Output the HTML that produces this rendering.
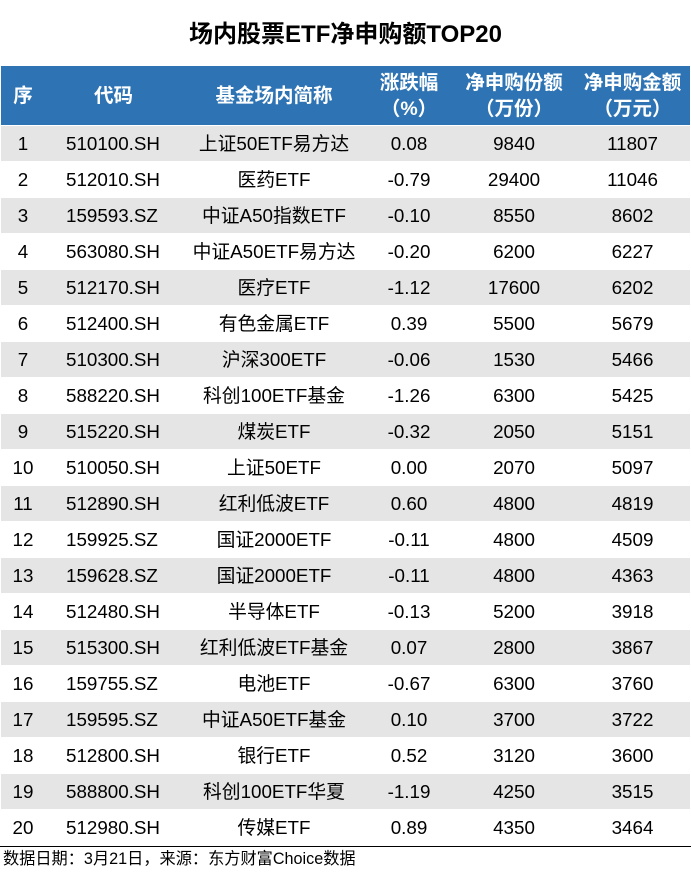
<!DOCTYPE html>
<html><head><meta charset="utf-8"><style>
body{margin:0;width:691px;height:881px;background:#fff;font-family:"Liberation Sans","Noto Sans CJK SC",sans-serif;color:#000;position:relative;overflow:hidden}
.t{position:absolute;top:19px;left:0;width:691px;text-align:center;font-size:24px;font-weight:bold;line-height:32px}
.h{position:absolute;top:66px;left:1px;width:689px;height:59px;background:#2e74b5;color:#fff;font-weight:bold;font-size:19.5px}
.h div{position:absolute;text-align:center;line-height:26px;white-space:nowrap}
.r{position:absolute;left:1px;width:689px;height:35px;font-size:18.8px;line-height:36px}
.r.g{background:#e5e5e5}
.r span{position:absolute;text-align:center;top:0;white-space:nowrap}
.c1{left:0;width:44px}.c2{left:65px;text-align:left!important}.c3{left:180px;width:186px}.c4{left:368px;width:80px}.c5{left:463px;width:100px}.c6{left:580px;width:103px}
.ln{position:absolute;left:0;top:846px;width:691px;height:1px;background:#000}
.f{position:absolute;left:3px;top:847px;font-size:16.2px;line-height:24px}
</style></head><body>
<div class="t">场内股票ETF净申购额TOP20</div>
<div class="h">
<div style="left:0;width:44px;top:17px">序</div>
<div style="left:65px;width:95px;top:17px">代码</div>
<div style="left:180px;width:186px;top:17px">基金场内简称</div>
<div style="left:368px;width:80px;top:4px">涨跌幅<br>（%）</div>
<div style="left:455px;width:116px;top:4px">净申购份额<br>（万份）</div>
<div style="left:575px;width:113px;top:4px">净申购金额<br>（万元）</div>
</div>
<div class="r g" style="top:126px"><span class="c1">1</span><span class="c2">510100.SH</span><span class="c3">上证50ETF易方达</span><span class="c4">0.08</span><span class="c5">9840</span><span class="c6">11807</span></div>
<div class="r" style="top:162px"><span class="c1">2</span><span class="c2">512010.SH</span><span class="c3">医药ETF</span><span class="c4">-0.79</span><span class="c5">29400</span><span class="c6">11046</span></div>
<div class="r g" style="top:198px"><span class="c1">3</span><span class="c2">159593.SZ</span><span class="c3">中证A50指数ETF</span><span class="c4">-0.10</span><span class="c5">8550</span><span class="c6">8602</span></div>
<div class="r" style="top:234px"><span class="c1">4</span><span class="c2">563080.SH</span><span class="c3">中证A50ETF易方达</span><span class="c4">-0.20</span><span class="c5">6200</span><span class="c6">6227</span></div>
<div class="r g" style="top:270px"><span class="c1">5</span><span class="c2">512170.SH</span><span class="c3">医疗ETF</span><span class="c4">-1.12</span><span class="c5">17600</span><span class="c6">6202</span></div>
<div class="r" style="top:306px"><span class="c1">6</span><span class="c2">512400.SH</span><span class="c3">有色金属ETF</span><span class="c4">0.39</span><span class="c5">5500</span><span class="c6">5679</span></div>
<div class="r g" style="top:342px"><span class="c1">7</span><span class="c2">510300.SH</span><span class="c3">沪深300ETF</span><span class="c4">-0.06</span><span class="c5">1530</span><span class="c6">5466</span></div>
<div class="r" style="top:378px"><span class="c1">8</span><span class="c2">588220.SH</span><span class="c3">科创100ETF基金</span><span class="c4">-1.26</span><span class="c5">6300</span><span class="c6">5425</span></div>
<div class="r g" style="top:414px"><span class="c1">9</span><span class="c2">515220.SH</span><span class="c3">煤炭ETF</span><span class="c4">-0.32</span><span class="c5">2050</span><span class="c6">5151</span></div>
<div class="r" style="top:450px"><span class="c1">10</span><span class="c2">510050.SH</span><span class="c3">上证50ETF</span><span class="c4">0.00</span><span class="c5">2070</span><span class="c6">5097</span></div>
<div class="r g" style="top:486px"><span class="c1">11</span><span class="c2">512890.SH</span><span class="c3">红利低波ETF</span><span class="c4">0.60</span><span class="c5">4800</span><span class="c6">4819</span></div>
<div class="r" style="top:522px"><span class="c1">12</span><span class="c2">159925.SZ</span><span class="c3">国证2000ETF</span><span class="c4">-0.11</span><span class="c5">4800</span><span class="c6">4509</span></div>
<div class="r g" style="top:558px"><span class="c1">13</span><span class="c2">159628.SZ</span><span class="c3">国证2000ETF</span><span class="c4">-0.11</span><span class="c5">4800</span><span class="c6">4363</span></div>
<div class="r" style="top:594px"><span class="c1">14</span><span class="c2">512480.SH</span><span class="c3">半导体ETF</span><span class="c4">-0.13</span><span class="c5">5200</span><span class="c6">3918</span></div>
<div class="r g" style="top:630px"><span class="c1">15</span><span class="c2">515300.SH</span><span class="c3">红利低波ETF基金</span><span class="c4">0.07</span><span class="c5">2800</span><span class="c6">3867</span></div>
<div class="r" style="top:666px"><span class="c1">16</span><span class="c2">159755.SZ</span><span class="c3">电池ETF</span><span class="c4">-0.67</span><span class="c5">6300</span><span class="c6">3760</span></div>
<div class="r g" style="top:702px"><span class="c1">17</span><span class="c2">159595.SZ</span><span class="c3">中证A50ETF基金</span><span class="c4">0.10</span><span class="c5">3700</span><span class="c6">3722</span></div>
<div class="r" style="top:738px"><span class="c1">18</span><span class="c2">512800.SH</span><span class="c3">银行ETF</span><span class="c4">0.52</span><span class="c5">3120</span><span class="c6">3600</span></div>
<div class="r g" style="top:774px"><span class="c1">19</span><span class="c2">588800.SH</span><span class="c3">科创100ETF华夏</span><span class="c4">-1.19</span><span class="c5">4250</span><span class="c6">3515</span></div>
<div class="r" style="top:810px"><span class="c1">20</span><span class="c2">512980.SH</span><span class="c3">传媒ETF</span><span class="c4">0.89</span><span class="c5">4350</span><span class="c6">3464</span></div>
<div class="ln"></div>
<div class="f">数据日期：3月21日，来源：东方财富Choice数据</div>
</body></html>
